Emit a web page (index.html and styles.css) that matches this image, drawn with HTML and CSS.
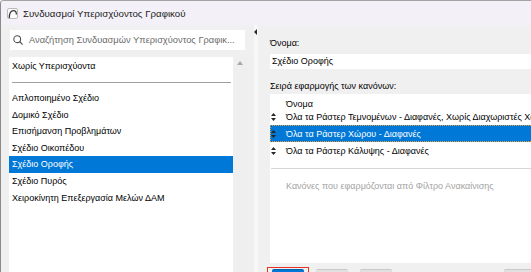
FILE: index.html
```html
<!DOCTYPE html>
<html lang="el">
<head>
<meta charset="utf-8">
<title>Συνδυασμοί Υπερισχύοντος Γραφικού</title>
<link rel="stylesheet" href="styles.css">
</head>
<body>
<div class="window">
  <div class="titlebar">
    <svg class="app-icon" width="11" height="11" viewBox="0 0 11 11">
      <rect x="0.5" y="0.5" width="10" height="10" rx="1.5" fill="#fbfbfb" stroke="#b9b9b9"/>
      <path d="M2.3 10 C2.3 5 4 2.6 6.4 2.6 C8.4 2.6 9.4 4.2 9.4 6.4" fill="none" stroke="#3c3c3c" stroke-width="1.3"/>
    </svg>
    <span class="title">Συνδυασμοί Υπερισχύοντος Γραφικού</span>
  </div>
  <div class="content">
    <div class="left">
      <div class="search">
        <svg class="search-icon" width="10" height="10" viewBox="0 0 10 10">
          <circle cx="4.2" cy="4.2" r="3.4" fill="none" stroke="#505050" stroke-width="1.1"/>
          <path d="M6.7 6.7 L9.6 9.6" stroke="#505050" stroke-width="1.2"/>
        </svg>
        <span class="placeholder">Αναζήτηση Συνδυασμών Υπερισχύοντος Γραφικ...</span>
      </div>
      <div class="listwrap">
        <div class="list">
          <div class="item">Χωρίς Υπερισχύοντα</div>
          <div class="sep"></div>
          <div class="item">Απλοποιημένο Σχέδιο</div>
          <div class="item">Δομικό Σχέδιο</div>
          <div class="item">Επισήμανση Προβλημάτων</div>
          <div class="item">Σχέδιο Οικοπέδου</div>
          <div class="item selected">Σχέδιο Οροφής</div>
          <div class="item">Σχέδιο Πυρός</div>
          <div class="item">Χειροκίνητη Επεξεργασία Μελών ΔΑΜ</div>
        </div>
        <div class="scrollbar"><span class="arrow-up"></span></div>
      </div>
    </div>
    <div class="splitter"><span class="collapse"></span></div>
    <div class="right">
      <div class="label">Όνομα:</div>
      <div class="input">Σχέδιο Οροφής</div>
      <div class="label label-rules">Σειρά εφαρμογής των κανόνων:</div>
      <div class="table">
        <div class="thead">Όνομα</div>
        <div class="row">
          <svg class="drag" width="5" height="8" viewBox="0 0 5 8"><path d="M2.5 0 L5 3 L0 3 Z M0 5 L5 5 L2.5 8 Z" fill="#262626"/></svg>
          <span class="cell">Όλα τα Ράστερ Τεμνομένων - Διαφανές, Χωρίς Διαχωριστές Χώρων</span>
        </div>
        <div class="row selected">
          <svg class="drag" width="5" height="8" viewBox="0 0 5 8"><path d="M2.5 0 L5 3 L0 3 Z M0 5 L5 5 L2.5 8 Z" fill="#262626"/></svg>
          <span class="cell">Όλα τα Ράστερ Χώρου - Διαφανές</span>
        </div>
        <div class="row">
          <svg class="drag" width="5" height="8" viewBox="0 0 5 8"><path d="M2.5 0 L5 3 L0 3 Z M0 5 L5 5 L2.5 8 Z" fill="#262626"/></svg>
          <span class="cell">Όλα τα Ράστερ Κάλυψης - Διαφανές</span>
        </div>
        <div class="tsep"></div>
        <div class="note">Κανόνες που εφαρμόζονται από Φίλτρο Ανακαίνισης</div>
      </div>
      <div class="buttons">
        <div class="btn-focus"><div class="btn btn-primary"></div></div>
        <div class="btn btn-2"></div>
        <div class="btn btn-3"></div>
        <div class="btn btn-4"></div>
      </div>
    </div>
  </div>
</div>
</body>
</html>
```

FILE: styles.css
```css
html, body {
  margin: 0;
  padding: 0;
}
body {
  width: 531px;
  height: 272px;
  overflow: hidden;
  background: #f0f0f0;
  font-family: "Liberation Sans", Arial, sans-serif;
  font-size: 9px;
  color: #000;
}
.window {
  height: 272px;
  box-sizing: border-box;
  border-top: 1px solid #a3a3a3;
  border-left: 1px solid #8a8a8a;
  border-top-left-radius: 4px;
  display: flex;
  flex-direction: column;
  overflow: hidden;
}
.titlebar {
  height: 24px;
  flex: none;
  background: #f3f1f7;
  display: flex;
  align-items: center;
  padding-left: 6px;
}
.app-icon {
  display: block;
  flex: none;
}
.title {
  margin-left: 5px;
  font-size: 9.7px;
  color: #1a1a1a;
}
.content {
  flex: 1;
  display: flex;
  min-height: 0;
}
.left {
  width: 253px;
  flex: none;
  display: flex;
  flex-direction: column;
  padding-top: 5px;
  box-sizing: border-box;
}
.search {
  margin-left: 9px;
  width: 235px;
  height: 20px;
  background: #fff;
  display: flex;
  align-items: center;
  padding-left: 3px;
  box-sizing: border-box;
  flex: none;
}
.search-icon {
  display: block;
  flex: none;
}
.placeholder {
  margin-left: 6px;
  color: #6b6b6b;
  white-space: nowrap;
  font-size: 9.3px;
}
.listwrap {
  margin-top: 7px;
  margin-left: 8px;
  flex: 1;
  display: flex;
  min-height: 0;
}
.list {
  width: 224px;
  background: #fff;
  padding-top: 1px;
  box-sizing: border-box;
}
.item {
  height: 16.6px;
  line-height: 16.6px;
  padding-left: 3px;
  white-space: nowrap;
}
.item.selected {
  background: #0078d7;
  color: #fff;
}
.sep {
  height: 1px;
  background: #a0a0a0;
  margin: 7px 2px 7.4px 3px;
}
.scrollbar {
  width: 21px;
  background: #efefef;
  padding-top: 4px;
  box-sizing: border-box;
}
.arrow-up {
  display: block;
  width: 0;
  height: 0;
  margin-left: 4px;
  border-left: 3px solid transparent;
  border-right: 3px solid transparent;
  border-bottom: 4px solid #a8a8a8;
}
.splitter {
  width: 4px;
  flex: none;
  background: #f7f7f7;
  padding-top: 4px;
  box-sizing: border-box;
}
.collapse {
  display: block;
  width: 0;
  height: 0;
  border-top: 3px solid transparent;
  border-bottom: 3px solid transparent;
  border-right: 3px solid #2a2a2a;
}
.right {
  flex: 1;
  margin-right: -40px;
  padding-left: 12px;
  padding-top: 11px;
  display: flex;
  flex-direction: column;
  min-width: 0;
}
.label {
  height: 14px;
  line-height: 14px;
  white-space: nowrap;
}
.input {
  margin-top: 4px;
  height: 15px;
  line-height: 15px;
  background: #fff;
  padding-left: 2px;
  white-space: nowrap;
}
.label-rules {
  margin-top: 10px;
}
.table {
  margin-top: 1px;
  height: 168.5px;
  flex: none;
  background: #fff;
  overflow: hidden;
}
.thead {
  height: 14px;
  box-sizing: border-box;
  padding-top: 4px;
  line-height: 12px;
  padding-left: 16px;
}
.row {
  height: 17px;
  display: flex;
  align-items: center;
  padding-left: 1px;
  white-space: nowrap;
}
.row.selected {
  background: #0078d7;
  color: #fff;
  outline: 1px dotted #e9a23b;
  outline-offset: -1px;
}
.drag {
  display: block;
  flex: none;
  margin-right: 10px;
}
.cell {
  flex: none;
}
.tsep {
  margin-top: 9px;
  margin-left: 1px;
  height: 1px;
  background: #d6d6d6;
}
.note {
  margin-top: 9px;
  height: 16px;
  line-height: 16px;
  padding-left: 16px;
  color: #a3a3a3;
  white-space: nowrap;
}
.buttons {
  margin-top: 4.5px;
  margin-left: -3px;
  display: flex;
  align-items: flex-start;
}
.btn-focus {
  width: 42px;
  height: 22px;
  box-sizing: border-box;
  border: 1px solid #e5341f;
  padding: 1px 4px 0 4px;
}
.btn {
  height: 20px;
  border-radius: 2px;
  background: #e1e1e1;
  border-top: 1px solid #c8c8c8;
  box-sizing: border-box;
}
.btn-primary {
  background: #0078d7;
  border-top-color: #0063b1;
}
.btn-2,
.btn-3 {
  width: 32px;
  margin-top: 2px;
}
.btn-2 {
  margin-left: 7px;
}
.btn-3 {
  margin-left: 12px;
}
.btn-4 {
  width: 40px;
  margin-top: 2px;
  margin-left: 112px;
}
```
